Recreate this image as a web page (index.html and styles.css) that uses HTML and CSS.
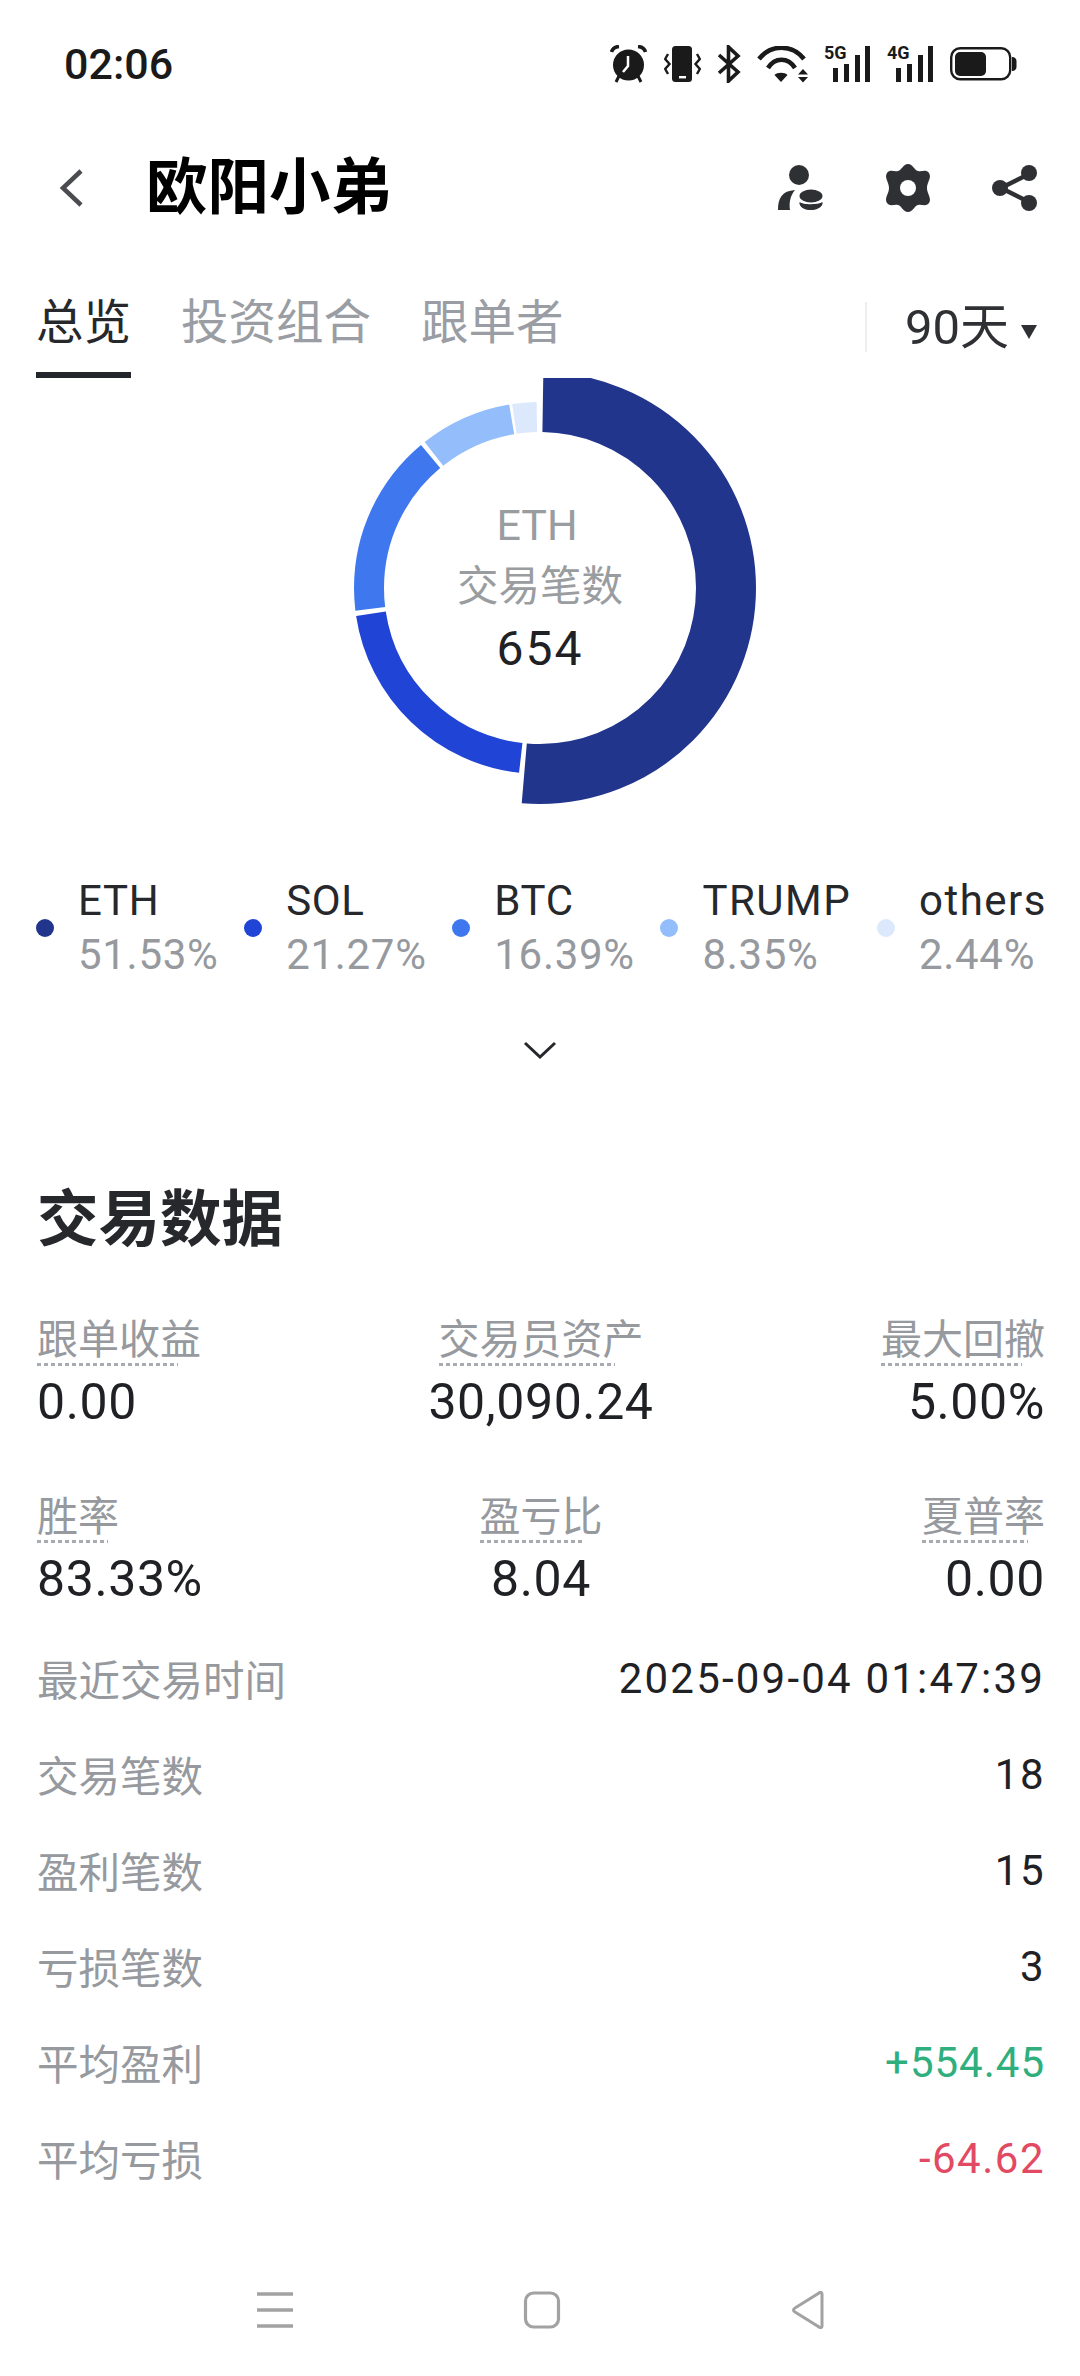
FILE: index.html
```html
<!DOCTYPE html>
<html lang="zh-CN">
<head>
    <meta charset="UTF-8">
    <meta name="viewport" content="width=device-width, initial-scale=1.0">
    <title>欧阳小弟</title>
    <link rel="stylesheet" href="styles.css">
</head>
<body>
    <div class="statusbar">
        <span class="time">02:06</span>
        <div class="status-icons">
            <svg width="38" height="38" viewBox="0 0 38 38">
                <circle cx="18.5" cy="20" r="15.5" fill="#1a1a1a"/>
                <path d="M1.5 7 Q3 2 9 1.5 M35.5 7 Q34 2 28 1.5" fill="none" stroke="#1a1a1a" stroke-width="3.6"/>
                <path d="M9 31 L6 37 M28 31 L31 37" stroke="#1a1a1a" stroke-width="3"/>
                <path d="M18 11 V21 L13 27" fill="none" stroke="#fff" stroke-width="2.5"/>
            </svg>
            <svg width="37" height="36" viewBox="0 0 37 36">
                <rect x="8" y="0" width="20" height="36" rx="3.5" fill="#1a1a1a"/>
                <rect x="15" y="30" width="7" height="2.4" fill="#fff"/>
                <path d="M4 8 L1.2 13 L5.5 18 L1.2 23 L4 28 M33 8 L35.8 13 L31.5 18 L35.8 23 L33 28" fill="none" stroke="#1a1a1a" stroke-width="2.4"/>
            </svg>
            <svg width="24" height="38" viewBox="0 0 24 38">
                <path d="M2 10 L21 27 L11.5 36 V2 L21 11 L2 28" fill="none" stroke="#1a1a1a" stroke-width="3.6"/>
            </svg>
            <svg width="51" height="37" viewBox="0 0 51 37">
                <path d="M2 13 C14 -2 35 -2 47 13 M11 22 C18 11 31 11 38 22" fill="none" stroke="#1a1a1a" stroke-width="4.6"/>
                <path d="M24 36 L17.5 29 C20 26 28 26 30.5 29 Z" fill="#1a1a1a"/>
                <path d="M46 23 L51 28.5 H41 Z M41 31 H51 L46 36.5 Z" fill="#1a1a1a"/>
            </svg>
            <div class="signal">
                <span class="net">5G</span>
                <svg width="47" height="36" viewBox="0 0 47 36">
                    <path d="M9 22h5v14h-5z M20 18h5v18h-5z M31 9h5v27h-5z M41 0h5v36h-5z" fill="#1a1a1a"/>
                </svg>
            </div>
            <div class="signal">
                <span class="net">4G</span>
                <svg width="47" height="36" viewBox="0 0 47 36">
                    <path d="M9 22h5v14h-5z M20 18h5v18h-5z M31 9h5v27h-5z M41 0h5v36h-5z" fill="#1a1a1a"/>
                </svg>
            </div>
            <svg width="67" height="34" viewBox="0 0 67 34">
                <rect x="1.2" y="1.2" width="59" height="31" rx="9" fill="none" stroke="#1a1a1a" stroke-width="2.4"/>
                <rect x="5" y="5" width="31" height="24" rx="5" fill="#1a1a1a"/>
                <path d="M62 10 C65 10 66.5 12 66.5 14 V20 C66.5 22 65 24 62 24 Z" fill="#1a1a1a"/>
            </svg>
        </div>
    </div>

    <div class="header">
        <svg class="back" width="26" height="40" viewBox="0 0 26 40">
            <path d="M23 3 L5 20 L23 37" fill="none" stroke="#4a4c50" stroke-width="4.5"/>
        </svg>
        <h1>欧阳小弟</h1>
        <div class="header-icons">
            <svg width="46" height="46" viewBox="0 0 46 46">
                <circle cx="21" cy="10" r="10" fill="#2e3033"/>
                <path d="M0 45 C0 33 4 26 17 25 C12 31 11 38 12 45 Z" fill="#2e3033"/>
                <ellipse cx="33" cy="31" rx="11.5" ry="6.5" fill="#2e3033"/>
                <path d="M21.5 37 C25 40 40 40 44.5 37 V39 C43 43 38 45 33 45 C27 45 23 43 21.5 39 Z" fill="#2e3033"/>
            </svg>
            <svg width="46" height="48" viewBox="0 0 46 48">
                <path d="M23 0 C28 0 29 6 33 7 C37 8 41 5 44 9 C47 14 42 18 42 24 C42 30 47 34 44 39 C41 43 37 40 33 41 C29 42 28 48 23 48 C18 48 17 42 13 41 C9 40 5 43 2 39 C-1 34 4 30 4 24 C4 18 -1 14 2 9 C5 5 9 8 13 7 C17 6 18 0 23 0 Z" fill="#2e3033"/>
                <circle cx="23" cy="24" r="8" fill="#fff"/>
            </svg>
            <svg width="46" height="48" viewBox="0 0 46 48">
                <path d="M37 10 L9 24 L37 38" fill="none" stroke="#2e3033" stroke-width="4.5"/>
                <circle cx="37" cy="9" r="8" fill="#2e3033"/>
                <circle cx="8" cy="24" r="8" fill="#2e3033"/>
                <circle cx="37" cy="39" r="8" fill="#2e3033"/>
            </svg>
        </div>
    </div>

    <div class="tabs">
        <a class="tab active">总览</a>
        <a class="tab">投资组合</a>
        <a class="tab">跟单者</a>
        <div class="range">
            <span>90天</span>
            <svg width="18" height="15" viewBox="0 0 18 15"><path d="M1 1 H17 L9 15 Z" fill="#2e3033"/></svg>
        </div>
    </div>

    <div class="donut">
        <svg width="440" height="430" viewBox="0 0 440 430">
            <g transform="rotate(-90 220 210)" fill="none">
                <circle cx="220" cy="210" r="186" pathLength="100" stroke="#21358c" stroke-width="60" stroke-dasharray="51.1 48.9" stroke-dashoffset="-0.25"/>
                <circle cx="220" cy="210" r="171" pathLength="100" stroke="#2044d6" stroke-width="30" stroke-dasharray="20.8 79.2" stroke-dashoffset="-51.8"/>
                <circle cx="220" cy="210" r="171" pathLength="100" stroke="#3f78ee" stroke-width="30" stroke-dasharray="15.9 84.1" stroke-dashoffset="-73.05"/>
                <circle cx="220" cy="210" r="171" pathLength="100" stroke="#94bdfb" stroke-width="30" stroke-dasharray="8 92" stroke-dashoffset="-89.35"/>
                <circle cx="220" cy="210" r="171" pathLength="100" stroke="#dce8fc" stroke-width="30" stroke-dasharray="2.1 97.9" stroke-dashoffset="-97.6"/>
            </g>
        </svg>
        <div class="donut-text">
            <div class="donut-coin">ETH</div>
            <div class="donut-label">交易笔数</div>
            <div class="donut-num">654</div>
        </div>
    </div>

    <div class="legend">
        <div class="legend-item"><i class="dot dot-eth"></i><div><div class="legend-name">ETH</div><div class="legend-pct">51.53%</div></div></div>
        <div class="legend-item"><i class="dot dot-sol"></i><div><div class="legend-name">SOL</div><div class="legend-pct">21.27%</div></div></div>
        <div class="legend-item"><i class="dot dot-btc"></i><div><div class="legend-name">BTC</div><div class="legend-pct">16.39%</div></div></div>
        <div class="legend-item"><i class="dot dot-trump"></i><div><div class="legend-name wide">TRUMP</div><div class="legend-pct">8.35%</div></div></div>
        <div class="legend-item"><i class="dot dot-others"></i><div><div class="legend-name wide">others</div><div class="legend-pct">2.44%</div></div></div>
    </div>

    <div class="more">
        <svg width="34" height="18" viewBox="0 0 34 18"><path d="M2 2 L17 16 L32 2" fill="none" stroke="#26282c" stroke-width="3"/></svg>
    </div>

    <h2>交易数据</h2>

    <div class="metrics">
        <div class="metric"><span class="metric-label">跟单收益</span><span class="metric-value">0.00</span></div>
        <div class="metric mid"><span class="metric-label">交易员资产</span><span class="metric-value">30,090.24</span></div>
        <div class="metric end"><span class="metric-label">最大回撤</span><span class="metric-value">5.00%</span></div>
        <div class="metric"><span class="metric-label">胜率</span><span class="metric-value">83.33%</span></div>
        <div class="metric mid"><span class="metric-label">盈亏比</span><span class="metric-value">8.04</span></div>
        <div class="metric end"><span class="metric-label">夏普率</span><span class="metric-value">0.00</span></div>
    </div>

    <div class="rows">
        <div class="row"><span>最近交易时间</span><b class="date">2025-09-04 01:47:39</b></div>
        <div class="row"><span>交易笔数</span><b>18</b></div>
        <div class="row"><span>盈利笔数</span><b>15</b></div>
        <div class="row"><span>亏损笔数</span><b>3</b></div>
        <div class="row"><span>平均盈利</span><b class="up">+554.45</b></div>
        <div class="row"><span>平均亏损</span><b class="down">-64.62</b></div>
    </div>

    <div class="navbar">
        <svg width="38" height="38" viewBox="0 0 38 38"><path d="M1 3 H37 M1 19 H37 M1 35 H37" stroke="#a2a2a2" stroke-width="3.4"/></svg>
        <svg width="38" height="38" viewBox="0 0 38 38"><rect x="2.5" y="2" width="33" height="34" rx="8" fill="none" stroke="#a2a2a2" stroke-width="3.2"/></svg>
        <svg width="38" height="38" viewBox="0 0 38 38"><path d="M33 3 V35 C33 37 31 37 30 36 L6 21 C4 20 4 18 6 17 L30 2 C31 1 33 1 33 3 Z" fill="none" stroke="#a2a2a2" stroke-width="3"/></svg>
    </div>
</body>
</html>
```

FILE: styles.css
```css
* {
    box-sizing: border-box;
}
body {
    margin: 0;
    width: 1080px;
    height: 2376px;
    overflow: hidden;
    background: #fff;
    color: #26282c;
    font-family: Roboto, "Noto Sans CJK SC", sans-serif;
}
.statusbar {
    height: 124px;
    padding: 4px 63px 0 64px;
    display: flex;
    align-items: center;
    justify-content: space-between;
}
.time {
    font-size: 43px;
    font-weight: 500;
    color: #1a1a1a;
}
.status-icons {
    display: flex;
    align-items: center;
    gap: 16px;
}
.signal {
    position: relative;
    width: 47px;
    height: 36px;
}
.signal svg {
    display: block;
}
.net {
    position: absolute;
    left: 0;
    top: -2px;
    font-size: 18px;
    line-height: 18px;
    font-weight: 700;
    color: #1a1a1a;
}
.header {
    height: 128px;
    padding-left: 58px;
    padding-right: 42px;
    display: flex;
    align-items: center;
}
.header h1 {
    margin: 0 0 0 62px;
    font-size: 61.5px;
    font-weight: 700;
    line-height: 80px;
    color: #000;
}
.header-icons {
    margin-left: auto;
    display: flex;
    align-items: center;
    gap: 61px;
}
.tabs {
    height: 126px;
    padding: 0 42px 0 36px;
    display: flex;
    align-items: flex-start;
}
.tab {
    height: 126px;
    padding-top: 42px;
    margin-right: 50px;
    font-size: 47.5px;
    line-height: 58px;
    color: #9a9da3;
}
.tab.active {
    color: #26282c;
    border-bottom: 6px solid #24262e;
}
.range {
    margin-left: auto;
    margin-top: 50px;
    height: 50px;
    padding-left: 38px;
    border-left: 2px solid #eeeeee;
    display: flex;
    align-items: center;
    gap: 11px;
    font-size: 49px;
    color: #2e3033;
}
.range span {
    margin-bottom: 10px;
}
.range svg {
    margin-top: 8px;
}
.donut {
    height: 430px;
    position: relative;
    display: flex;
    justify-content: center;
}
.donut svg {
    display: block;
}
.donut-text {
    position: absolute;
    left: 0;
    right: 0;
    top: 116px;
    text-align: center;
}
.donut-coin {
    padding-right: 6px;
    font-size: 43px;
    line-height: 62px;
    color: #9a9da0;
}
.donut-label {
    font-size: 41.5px;
    line-height: 62px;
    color: #9a9da0;
}
.donut-num {
    font-size: 48px;
    line-height: 62px;
    letter-spacing: 2px;
    color: #1f2125;
}
.legend {
    margin-top: 65px;
    padding: 0 33px 0 36px;
    display: flex;
    justify-content: space-between;
}
.legend-item {
    display: flex;
    align-items: center;
    gap: 24px;
}
.dot {
    width: 18px;
    height: 18px;
    border-radius: 50%;
}
.dot-eth { background: #21358c; }
.dot-sol { background: #2044d6; }
.dot-btc { background: #3f78ee; }
.dot-trump { background: #94bdfb; }
.dot-others { background: #dce8fc; }
.legend-name, .legend-pct {
    font-size: 42px;
    line-height: 55px;
    letter-spacing: 0.7px;
}
.legend-name.wide {
    letter-spacing: 1.5px;
}
.legend-pct {
    margin-top: -1px;
    color: #96999e;
}
.more {
    margin-top: 59px;
    display: flex;
    justify-content: center;
}
.more svg {
    display: block;
}
h2 {
    margin: 121px 0 0;
    padding-left: 37px;
    font-size: 61.5px;
    line-height: 80px;
    font-weight: 700;
    color: #26282c;
}
.metrics {
    margin-top: 57px;
    padding: 0 35px 0 37px;
    display: grid;
    grid-template-columns: 1fr 1fr 1fr;
    row-gap: 62px;
}
.metric {
    display: flex;
    flex-direction: column;
    align-items: flex-start;
}
.metric.mid {
    align-items: center;
}
.metric.end {
    align-items: flex-end;
}
.metric-label {
    font-size: 41px;
    line-height: 46px;
    color: #96999e;
}
.metric-label::after {
    content: "";
    display: block;
    width: 86%;
    height: 3px;
    background: repeating-linear-gradient(to right, #a8abaf 0 4px, transparent 4px 7px);
}
.metric-value {
    margin-top: 6px;
    font-size: 50px;
    line-height: 60px;
    letter-spacing: 0.6px;
    color: #1f2125;
}
.rows {
    margin-top: 21px;
    padding: 0 35px 0 37px;
}
.row {
    height: 96px;
    display: flex;
    align-items: center;
    justify-content: space-between;
    font-size: 41.5px;
    color: #96999e;
}
.row b {
    font-size: 42px;
    font-weight: 400;
    letter-spacing: 1.5px;
    color: #1f2125;
}
.row b.date {
    letter-spacing: 2.2px;
}
.row b.up {
    color: #2fae7e;
    letter-spacing: 1px;
}
.row b.down {
    color: #e24a63;
}
.navbar {
    margin-top: 85px;
    padding: 0 253px 0 256px;
    display: flex;
    justify-content: space-between;
}
```
